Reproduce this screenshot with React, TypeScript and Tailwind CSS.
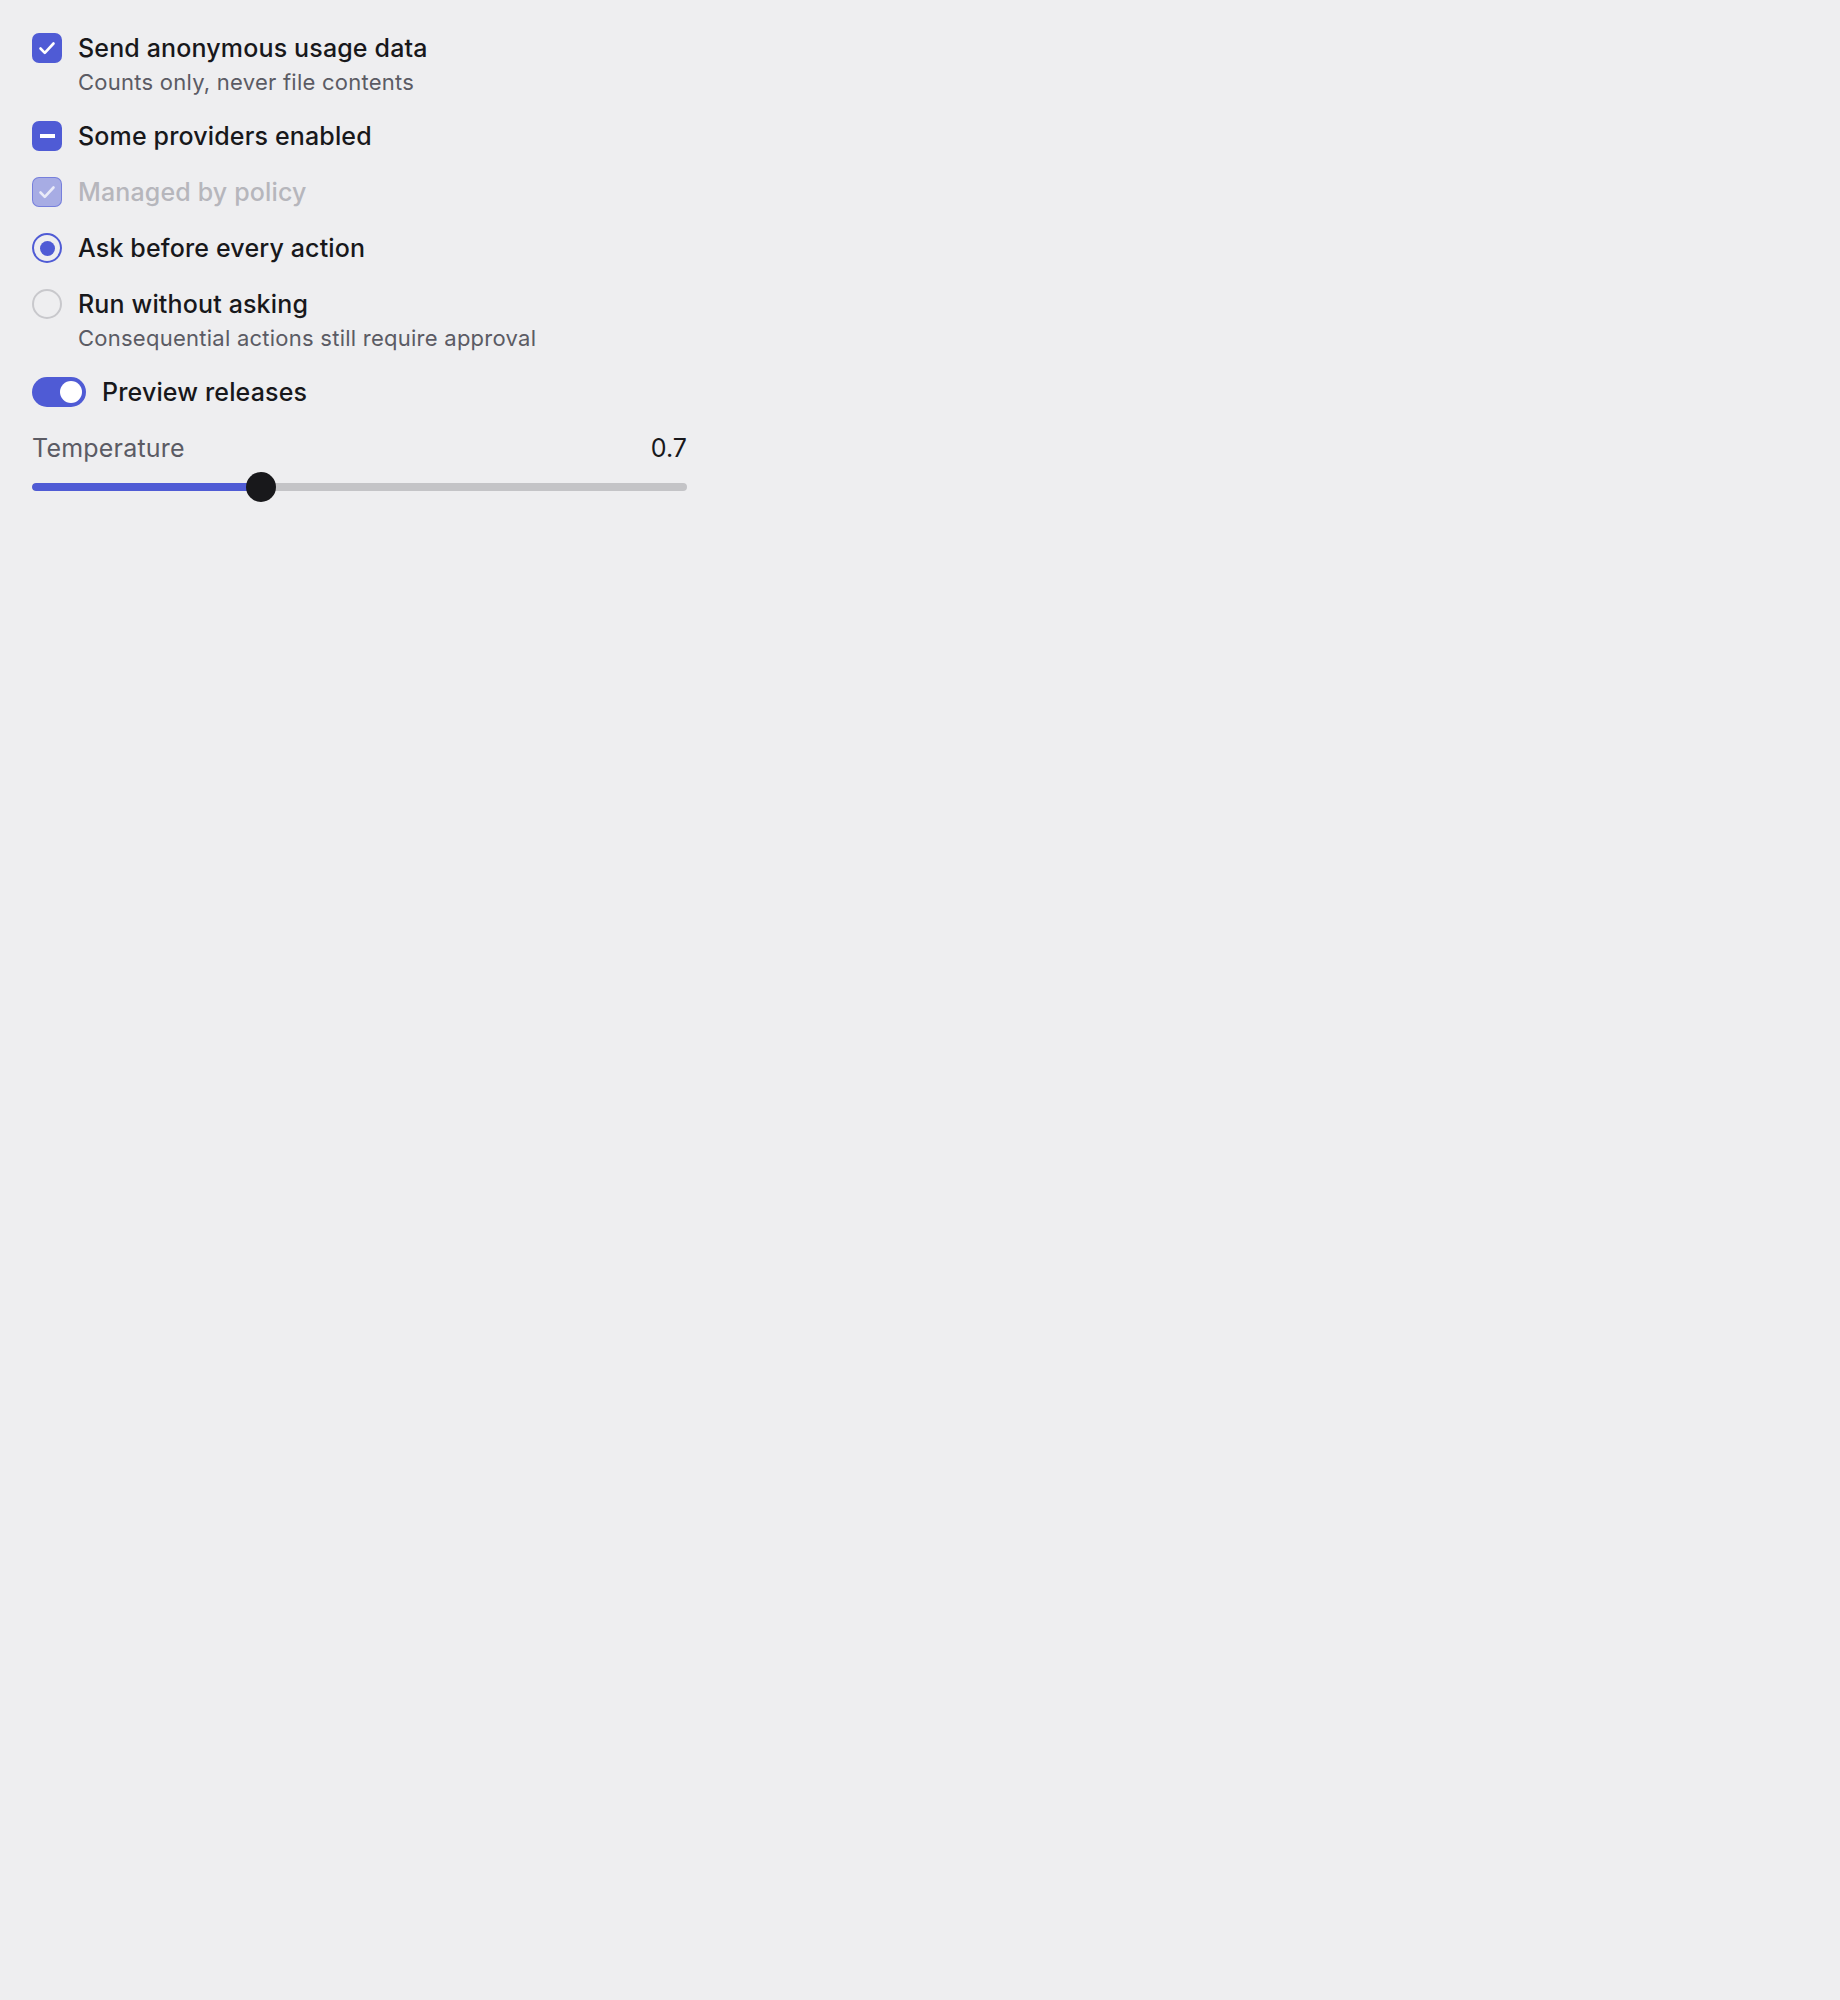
import React from 'react';

function CheckMark({ className }: { className?: string }) {
  return (
    <svg viewBox="0 0 30 30" className={className} fill="none">
      <polyline
        points="8.5,15.5 12.8,19.8 21.5,10.5"
        stroke="currentColor"
        strokeWidth="2.6"
        strokeLinecap="round"
        strokeLinejoin="round"
      />
    </svg>
  );
}

function Row({
  control,
  label,
  description,
  disabled,
}: {
  control: React.ReactNode;
  label: string;
  description?: string;
  disabled?: boolean;
}) {
  return (
    <div className="flex items-start gap-[16px]">
      <div className="h-[36px] flex items-center shrink-0">{control}</div>
      <div className="flex flex-col">
        <span
          className={
            disabled
              ? 'text-[25px] leading-[36px] font-medium tracking-[0.15px] text-[#b6b6bc]'
              : 'text-[25px] leading-[36px] font-medium tracking-[0.15px] text-[#18181b]'
          }
        >
          {label}
        </span>
        {description && (
          <span className="text-[22px] leading-[32px] tracking-[0.25px] text-[#5b5b64]">
            {description}
          </span>
        )}
      </div>
    </div>
  );
}

export default function App() {
  const value = 0.7;
  const pct = (value / 2) * 100;

  return (
    <div className="min-h-screen bg-[#eeeef0] font-['Inter',sans-serif]">
      <div className="w-[655px] ml-[32px] pt-[30px] flex flex-col gap-[20px]">
        <Row
          control={
            <div className="w-[30px] h-[30px] rounded-[7px] bg-[#4f5bd5] text-white">
              <CheckMark className="w-[30px] h-[30px]" />
            </div>
          }
          label="Send anonymous usage data"
          description="Counts only, never file contents"
        />
        <Row
          control={
            <div className="w-[30px] h-[30px] rounded-[7px] bg-[#4f5bd5] flex items-center justify-center">
              <div className="w-[15px] h-[4px] bg-white" />
            </div>
          }
          label="Some providers enabled"
        />
        <Row
          control={
            <div className="w-[30px] h-[30px] rounded-[7px] bg-[#4f5bd5]/45 border-[1.5px] border-[#4f5bd5]/55 text-white/75 flex items-center justify-center">
              <CheckMark className="w-[30px] h-[30px] shrink-0" />
            </div>
          }
          label="Managed by policy"
          disabled
        />
        <Row
          control={
            <div className="w-[30px] h-[30px] rounded-full border-[2px] border-[#4f5bd5] flex items-center justify-center">
              <div className="w-[15px] h-[15px] rounded-full bg-[#4f5bd5]" />
            </div>
          }
          label="Ask before every action"
        />
        <Row
          control={<div className="w-[30px] h-[30px] rounded-full border-[2px] border-[#c8c8cc]" />}
          label="Run without asking"
          description="Consequential actions still require approval"
        />
        <Row
          control={
            <div className="w-[54px] h-[30px] rounded-full bg-[#4f5bd5] flex items-center justify-end pr-[4px]">
              <div className="w-[22px] h-[22px] rounded-full bg-white" />
            </div>
          }
          label="Preview releases"
        />
        <div className="flex flex-col gap-[7px] mt-[1px]">
          <div className="flex items-center justify-between">
            <span className="text-[25px] leading-[34px] tracking-[0.2px] text-[#5b5b64]">Temperature</span>
            <span className="text-[25px] leading-[34px] text-[#18181b]">0.7</span>
          </div>
          <div className="relative h-[30px] flex items-center">
            <div className="w-full h-[8px] rounded-full bg-[#c4c4c7] overflow-hidden">
              <div className="h-full bg-[#4f5bd5] rounded-full" style={{ width: `${pct}%` }} />
            </div>
            <div
              className="absolute top-0 w-[30px] h-[30px] rounded-full bg-[#18181b]"
              style={{ left: `calc(${pct}% - 15px)` }}
            />
          </div>
        </div>
      </div>
    </div>
  );
}
